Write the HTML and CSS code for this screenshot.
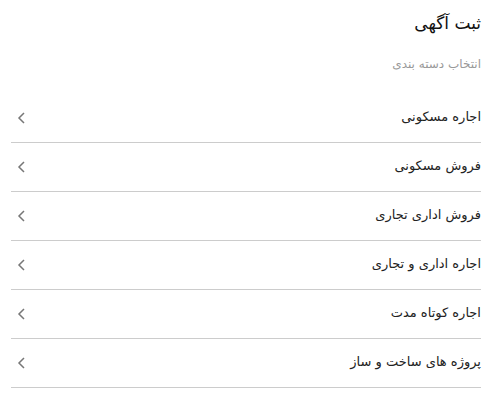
FILE: index.html
```html
<!DOCTYPE html>
<html lang="fa" dir="rtl">
<head>
<meta charset="utf-8">
<link rel="stylesheet" href="styles.css">
</head>
<body>
<div class="page">
  <h1 class="title">ثبت آگهی</h1>
  <p class="subtitle">انتخاب دسته بندی</p>
  <ul class="list">
    <li class="row"><span class="label">اجاره مسکونی</span><svg class="chev" width="10" height="14" viewBox="0 0 10 14"><path d="M7 2 L2 7 L7 12" fill="none" stroke="#777" stroke-width="1.5"/></svg></li>
    <li class="row"><span class="label">فروش مسکونی</span><svg class="chev" width="10" height="14" viewBox="0 0 10 14"><path d="M7 2 L2 7 L7 12" fill="none" stroke="#777" stroke-width="1.5"/></svg></li>
    <li class="row"><span class="label">فروش اداری تجاری</span><svg class="chev" width="10" height="14" viewBox="0 0 10 14"><path d="M7 2 L2 7 L7 12" fill="none" stroke="#777" stroke-width="1.5"/></svg></li>
    <li class="row"><span class="label">اجاره اداری و تجاری</span><svg class="chev" width="10" height="14" viewBox="0 0 10 14"><path d="M7 2 L2 7 L7 12" fill="none" stroke="#777" stroke-width="1.5"/></svg></li>
    <li class="row"><span class="label">اجاره کوتاه مدت</span><svg class="chev" width="10" height="14" viewBox="0 0 10 14"><path d="M7 2 L2 7 L7 12" fill="none" stroke="#777" stroke-width="1.5"/></svg></li>
    <li class="row"><span class="label">پروژه های ساخت و ساز</span><svg class="chev" width="10" height="14" viewBox="0 0 10 14"><path d="M7 2 L2 7 L7 12" fill="none" stroke="#777" stroke-width="1.5"/></svg></li>
  </ul>
</div>
</body>
</html>
```
FILE: styles.css
```css
html, body {
  margin: 0;
  padding: 0;
  background: #fff;
}
body {
  font-family: "DejaVu Sans", "Noto Sans", sans-serif;
  color: #222;
}
.page {
  padding: 0 14px 0 11px;
}
.title {
  margin: 0;
  padding-top: 2px;
  height: 42px;
  line-height: 42px;
  font-size: 17px;
  font-weight: normal;
  color: #111;
}
.subtitle {
  margin: 0;
  height: 42px;
  line-height: 40px;
  font-size: 12px;
  color: #999;
}
.list {
  list-style: none;
  margin: 8px 0 0;
  padding: 0;
}
.row {
  display: flex;
  align-items: center;
  justify-content: space-between;
  height: 48px;
  border-bottom: 1px solid #ccc;
}
.label {
  font-size: 13px;
  color: #222;
  padding-bottom: 4px;
}
.chev {
  display: block;
  margin-left: 6px;
}
```
